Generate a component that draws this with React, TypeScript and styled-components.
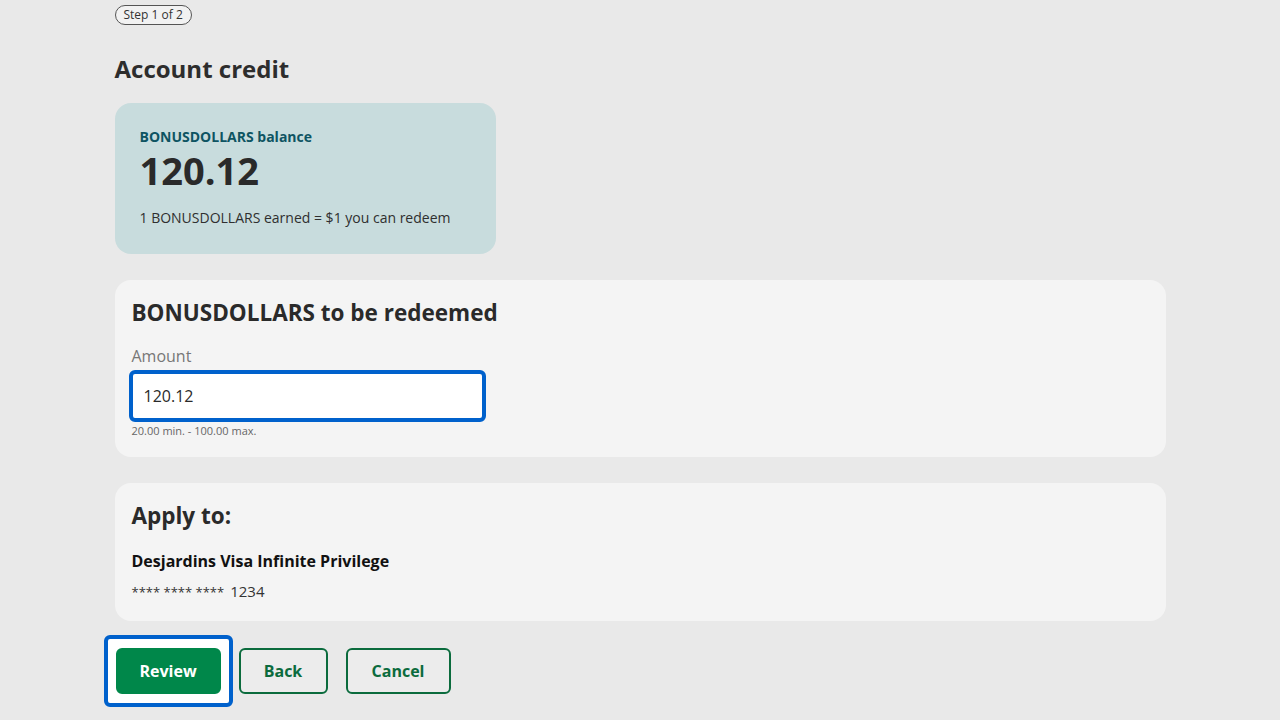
import React from "react";
import styled, { createGlobalStyle } from "styled-components";

const Global = createGlobalStyle`
  html, body { margin: 0; padding: 0; background: #e9e9e9; }
  body { font-family: "Open Sans", Lato, "Liberation Sans", sans-serif; color: #2a2a2a; }
  * { box-sizing: border-box; }
`;

const Page = styled.div`
  width: 1051px;
  margin: 0 auto;
  padding: 5px 0 20px;
  display: flex;
  flex-direction: column;
  align-items: flex-start;
`;

const StepPill = styled.div`
  height: 20px;
  padding: 0 8px;
  border: 1px solid #555;
  border-radius: 10px;
  font-size: 12px;
  line-height: 18px;
  color: #333;
  background: #f2f2f2;
`;

const PageTitle = styled.h1`
  margin: 28px 0 0;
  font-size: 24px;
  line-height: 32px;
  font-weight: 700;
  color: #2d2d2d;
`;

const BalanceCard = styled.div`
  margin-top: 18px;
  width: 381px;
  height: 151px;
  padding: 25px 25px;
  background: #c8dcdd;
  border-radius: 16px;
`;

const BalanceLabel = styled.div`
  font-size: 14px;
  line-height: 18px;
  font-weight: 700;
  color: #0e5462;
`;

const BalanceValue = styled.div`
  font-size: 38px;
  line-height: 48px;
  font-weight: 700;
  color: #2a2a2a;
`;

const BalanceNote = styled.div`
  margin-top: 15px;
  font-size: 14px;
  line-height: 18px;
  color: #2f2f2f;
`;

const Card = styled.section<{ $h: number }>`
  margin-top: 26px;
  width: 100%;
  height: ${(p) => p.$h}px;
  padding: 18px 17px;
  background: #f4f4f4;
  border-radius: 16px;
`;

const CardTitle = styled.h2`
  margin: 0;
  font-size: 22.5px;
  line-height: 30px;
  font-weight: 700;
  color: #2a2a2a;
`;

const FieldLabel = styled.label`
  display: block;
  margin-top: 18px;
  font-size: 16px;
  line-height: 20px;
  color: #777;
`;

const Input = styled.input`
  display: block;
  margin: 4px 0 0 -3px;
  width: 357px;
  height: 52px;
  padding: 0 11px;
  border: 4px solid #0061cc;
  border-radius: 6px;
  background: #fff;
  font-family: inherit;
  font-size: 16px;
  color: #2a2a2a;
  outline: none;
`;

const Helper = styled.div`
  margin-top: 2px;
  font-size: 11px;
  line-height: 14px;
  color: #666;
`;

const CardName = styled.div`
  margin-top: 20px;
  font-size: 16px;
  line-height: 20px;
  font-weight: 700;
  color: #111;
`;

const CardNumber = styled.div`
  margin-top: 10px;
  font-size: 15px;
  line-height: 20px;
  color: #333;
`;

const Mask = styled.span`
  font-size: 13px;
  margin-right: 6px;
`;

const Buttons = styled.div`
  margin-top: 27px;
  display: flex;
  gap: 18px;
  margin-left: 1px;
`;

const FocusRing = styled.span`
  position: relative;
  display: flex;
  isolation: isolate;
  &::before {
    content: "";
    position: absolute;
    top: -13px;
    bottom: -13px;
    left: -12px;
    right: -12px;
    border: 4px solid #0061cc;
    border-radius: 6px;
    background: #fff;
    z-index: -1;
  }
`;

const Button = styled.button<{ $primary?: boolean; $w: number }>`
  width: ${(p) => p.$w}px;
  height: 46px;
  border-radius: 6px;
  font-family: inherit;
  font-size: 16px;
  font-weight: 700;
  cursor: pointer;
  border: 2px solid ${(p) => (p.$primary ? "#00874a" : "#0b6b3d")};
  background: ${(p) => (p.$primary ? "#00874a" : "#ececec")};
  color: ${(p) => (p.$primary ? "#fff" : "#0b6b3d")};
`;

export default function App() {
  return (
    <>
      <Global />
      <Page>
        <StepPill>Step 1 of 2</StepPill>
        <PageTitle>Account credit</PageTitle>
        <BalanceCard>
          <BalanceLabel>BONUSDOLLARS balance</BalanceLabel>
          <BalanceValue>120.12</BalanceValue>
          <BalanceNote>1 BONUSDOLLARS earned = $1 you can redeem</BalanceNote>
        </BalanceCard>
        <Card $h={177}>
          <CardTitle>BONUSDOLLARS to be redeemed</CardTitle>
          <FieldLabel htmlFor="amount">Amount</FieldLabel>
          <Input id="amount" defaultValue="120.12" />
          <Helper>20.00 min. - 100.00 max.</Helper>
        </Card>
        <Card $h={138}>
          <CardTitle>Apply to:</CardTitle>
          <CardName>Desjardins Visa Infinite Privilege</CardName>
          <CardNumber>
            <Mask>**** **** ****</Mask>1234
          </CardNumber>
        </Card>
        <Buttons>
          <FocusRing>
            <Button $primary $w={105}>Review</Button>
          </FocusRing>
          <Button $w={89}>Back</Button>
          <Button $w={105}>Cancel</Button>
        </Buttons>
      </Page>
    </>
  );
}
